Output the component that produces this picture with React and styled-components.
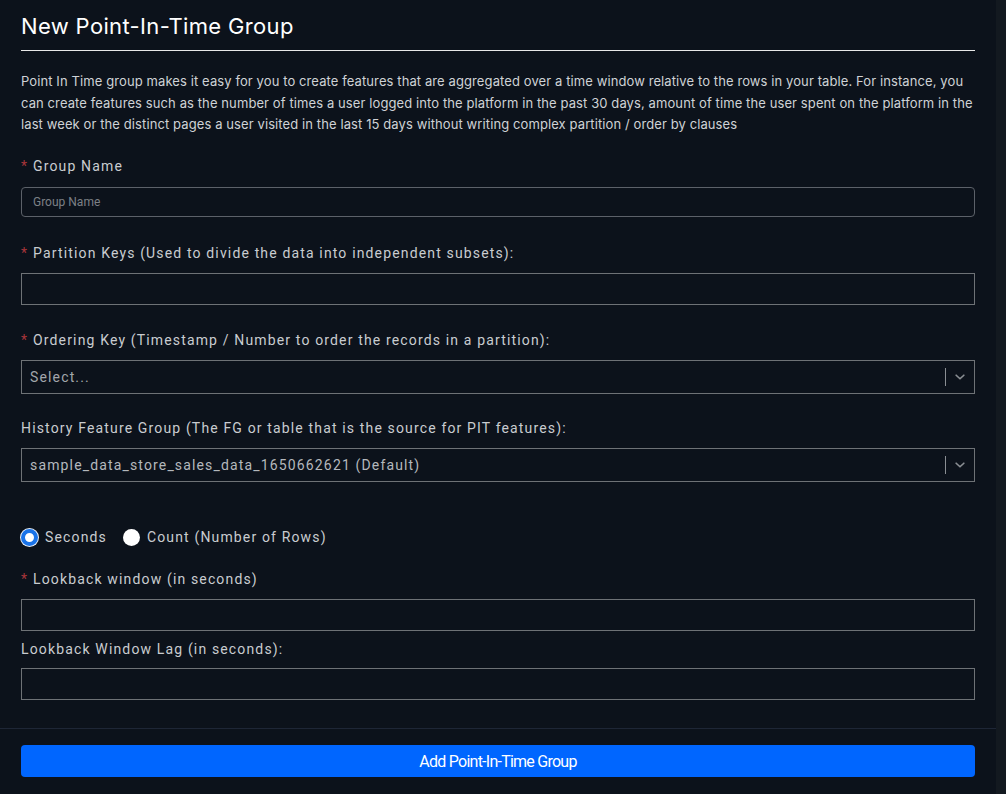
import React from "react";
import styled, { createGlobalStyle } from "styled-components";

const Global = createGlobalStyle`
  html, body { margin: 0; padding: 0; background: #0c121b; }
  body { font-family: Roboto, "Liberation Sans", sans-serif; }
  * { box-sizing: border-box; }
`;

const Page = styled.div`
  display: flex;
  width: 1006px;
  height: 794px;
  background: #0c121b;
  overflow: hidden;
`;

const Main = styled.div`
  flex: 1;
  display: flex;
  flex-direction: column;
`;

const ScrollTrack = styled.div`
  width: 10px;
  background: #131920;
`;

const Body = styled.div`
  padding: 11px 21px 0 21px;
  display: flex;
  flex-direction: column;
`;

const Title = styled.h1`
  margin: 0;
  font-family: Inter, "Noto Sans", sans-serif;
  font-weight: 400;
  font-size: 22px;
  line-height: 30px;
  letter-spacing: 0.35px;
  color: #ffffff;
  padding-bottom: 9px;
  border-bottom: 1px solid #e8e8e8;
`;

const Intro = styled.p`
  margin: 20px 0 0 0;
  font-family: Inter, "Noto Sans", sans-serif;
  font-size: 13px;
  line-height: 21.5px;
  color: #cfd2d6;
  letter-spacing: 0.1px;
`;

const Field = styled.div`
  margin-top: ${(p) => p.$top || 0}px;
  display: flex;
  flex-direction: column;
`;

const Label = styled.label`
  font-size: 14px;
  line-height: 20px;
  letter-spacing: 1.15px;
  color: #c9ccd0;
  margin-bottom: ${(p) => p.$gap ?? 11}px;
`;

const Star = styled.span`
  color: #a8353a;
  margin-right: 6px;
  letter-spacing: 0;
`;

const TextInput = styled.input`
  height: ${(p) => p.$h || 32}px;
  width: 100%;
  background: transparent;
  border: 1px solid ${(p) => (p.$rounded ? "#5c6169" : "#6e7276")};
  border-radius: ${(p) => (p.$rounded ? 4 : 0)}px;
  padding: 0 11px;
  font-family: Roboto, "Liberation Sans", sans-serif;
  font-size: ${(p) => (p.$rounded ? 12 : 14)}px;
  color: #cfd2d6;
  outline: none;
  &::placeholder {
    color: #7c8086;
  }
`;

const SelectBox = styled.div`
  height: 34px;
  border: 1px solid #6e7276;
  display: flex;
  align-items: center;
  padding-left: 8px;
`;

const SelectValue = styled.div`
  flex: 1;
  font-size: 14px;
  letter-spacing: 1.15px;
  color: ${(p) => (p.$placeholder ? "#a2a6ab" : "#b4b8bd")};
`;

const Divider = styled.span`
  width: 1px;
  height: 18px;
  background: #8a8e93;
`;

const Chevron = styled.div`
  width: 28px;
  display: flex;
  align-items: center;
  justify-content: center;
`;

const RadioRow = styled.div`
  margin-top: 47px;
  display: flex;
  align-items: center;
  gap: 16px;
`;

const RadioOption = styled.label`
  display: flex;
  align-items: center;
  gap: 7px;
  font-size: 14px;
  letter-spacing: 1.15px;
  color: #c9ccd0;
`;

const RadioDot = styled.span`
  width: 17px;
  height: 17px;
  border-radius: 50%;
  background: #ffffff;
  border: ${(p) => (p.$checked ? "4px solid #1a73e8" : "none")};
  box-shadow: ${(p) => (p.$checked ? "0 0 0 1px #e9eef5" : "none")};
`;

const Footer = styled.div`
  margin-top: auto;
  border-top: 1px solid #1e2636;
  padding: 16px 21px 17px 21px;
`;

const Button = styled.button`
  width: 100%;
  height: 32px;
  border: none;
  border-radius: 4px;
  background: #0066ff;
  color: #ffffff;
  font-family: Roboto, "Liberation Sans", sans-serif;
  font-size: 16px;
  letter-spacing: -0.75px;
`;

function ChevronIcon() {
  return (
    <svg width="14" height="14" viewBox="0 0 20 20">
      <path
        d="M4.5 7.5 L10 12.5 L15.5 7.5"
        fill="none"
        stroke="#8a8e93"
        strokeWidth="2.4"
        strokeLinecap="round"
        strokeLinejoin="round"
      />
    </svg>
  );
}

function Select({ value, placeholder }) {
  return (
    <SelectBox>
      <SelectValue $placeholder={placeholder}>{value}</SelectValue>
      <Divider />
      <Chevron>
        <ChevronIcon />
      </Chevron>
    </SelectBox>
  );
}

export default function App() {
  return (
    <Page>
      <Global />
      <Main>
        <Body>
          <Title>New Point-In-Time Group</Title>
          <Intro>
            Point In Time group makes it easy for you to create features that are aggregated over a time
            window relative to the rows in your table. For instance, you can create features such as the
            number of times a user logged into the platform in the past 30 days, amount of time the user
            spent on the platform in the last week or the distinct pages a user visited in the last 15 days
            without writing complex partition / order by clauses
          </Intro>

          <Field $top={20}>
            <Label>
              <Star>*</Star>Group Name
            </Label>
            <TextInput $rounded $h={30} placeholder="Group Name" />
          </Field>

          <Field $top={26}>
            <Label $gap={10}>
              <Star>*</Star>Partition Keys (Used to divide the data into independent subsets):
            </Label>
            <TextInput $h={32} />
          </Field>

          <Field $top={25}>
            <Label $gap={10}>
              <Star>*</Star>Ordering Key (Timestamp / Number to order the records in a partition):
            </Label>
            <Select value="Select..." placeholder />
          </Field>

          <Field $top={24}>
            <Label $gap={10}>History Feature Group (The FG or table that is the source for PIT features):</Label>
            <Select value="sample_data_store_sales_data_1650662621 (Default)" />
          </Field>

          <RadioRow>
            <RadioOption>
              <RadioDot $checked />
              Seconds
            </RadioOption>
            <RadioOption>
              <RadioDot />
              Count (Number of Rows)
            </RadioOption>
          </RadioRow>

          <Field $top={23}>
            <Label $gap={10}>
              <Star>*</Star>Lookback window (in seconds)
            </Label>
            <TextInput $h={32} />
          </Field>

          <Field $top={8}>
            <Label $gap={9}>Lookback Window Lag (in seconds):</Label>
            <TextInput $h={32} />
          </Field>
        </Body>
        <Footer>
          <Button>Add Point-In-Time Group</Button>
        </Footer>
      </Main>
      <ScrollTrack />
    </Page>
  );
}
